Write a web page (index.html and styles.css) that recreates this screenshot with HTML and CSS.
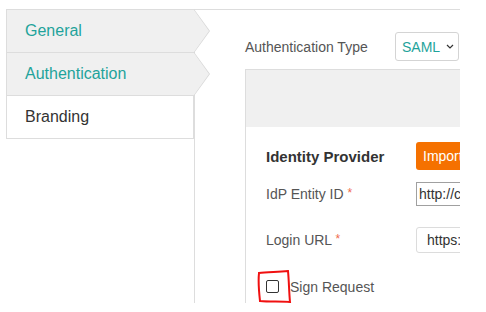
FILE: index.html
```html
<!DOCTYPE html>
<html lang="en">
<head>
    <meta charset="UTF-8">
    <meta name="viewport" content="width=device-width, initial-scale=1.0">
    <title>SSO Settings</title>
    <link rel="stylesheet" href="styles.css">
</head>
<body>
    <div class="layout">
        <!-- Settings tabs -->
        <ul class="tabs">
            <li class="tab tab-arrow">General</li>
            <li class="tab tab-arrow">Authentication</li>
            <li class="tab tab-current">Branding</li>
        </ul>

        <div class="content">
            <div class="type-row">
                <span class="type-label">Authentication Type</span>
                <div class="fake-select">
                    <span>SAML</span>
                    <svg width="8" height="5" viewBox="0 0 8 5"><path d="M1 1 L4 4 L7 1" fill="none" stroke="#333" stroke-width="1.2"/></svg>
                </div>
            </div>

            <div class="panel">
                <div class="panel-head"></div>
                <div class="panel-body">
                    <div class="form-row head-row">
                        <h3>Identity Provider</h3>
                        <button type="button" class="btn-import">Import Metadata</button>
                    </div>
                    <div class="form-row idp-row">
                        <label for="entityId">IdP Entity ID <span class="req">*</span></label>
                        <input type="text" id="entityId" class="input-plain" value="http://cloudsso.example.com/idp">
                    </div>
                    <div class="form-row login-row">
                        <label for="loginUrl">Login URL <span class="req">*</span></label>
                        <input type="text" id="loginUrl" class="input-round" value="https://sso.example.com/login">
                    </div>
                    <div class="check-row">
                        <span class="check-box"></span>
                        <span class="check-text">Sign Request</span>
                        <!-- hand-drawn marker -->
                        <svg class="marker" width="38" height="36" viewBox="0 0 38 36">
                            <path d="M3 3 C10 2 20 2 32 1 C33 11 33 22 34 32 C25 31 14 32 4 31 C3 22 2 12 3 3 Z" fill="none" stroke="#f01010" stroke-width="2"/>
                        </svg>
                    </div>
                </div>
            </div>
        </div>
    </div>
</body>
</html>
```

FILE: styles.css
```css
body {
    margin: 0;
    font-family: "Liberation Sans", Arial, sans-serif;
    background-color: #ffffff;
    color: #333;
}

.layout {
    display: flex;
    margin: 9px 0 0 6px;
    width: 454px;
    height: 294px;
}

/* Tabs */
.tabs {
    list-style: none;
    margin: 0;
    padding: 0;
    width: 188px;
    flex-shrink: 0;
    position: relative;
    z-index: 1;
    border-top: 1px solid #ddd;
    align-self: flex-start;
}

.tab {
    position: relative;
    height: 42px;
    line-height: 42px;
    padding-left: 18px;
    font-size: 16px;
    border-left: 1px solid #ddd;
    border-bottom: 1px solid #ddd;
}

.tab-arrow {
    background-color: #f0f0f0;
    color: #1fa39b;
}

.tab-arrow::before,
.tab-arrow::after {
    content: "";
    position: absolute;
    left: 100%;
    width: 0;
    height: 0;
}

.tab-arrow::before {
    top: -1px;
    border-left: 16px solid #d8d8d8;
    border-top: 22px solid transparent;
    border-bottom: 22px solid transparent;
}

.tab-arrow::after {
    top: 0;
    border-left: 15px solid #f0f0f0;
    border-top: 21px solid transparent;
    border-bottom: 21px solid transparent;
}

.tab-current {
    background-color: #ffffff;
    color: #333;
    border-right: 1px solid #ddd;
    width: 168px;
}

/* Content */
.content {
    flex: 1;
    border-top: 1px solid #ddd;
    border-left: 1px solid #ddd;
    padding: 22px 0 0 50px;
    overflow: hidden;
}

.type-row {
    display: flex;
    align-items: center;
    height: 29px;
}

.type-label {
    width: 150px;
    font-size: 14px;
    color: #555;
}

.fake-select {
    display: flex;
    align-items: center;
    gap: 6px;
    box-sizing: border-box;
    width: 64px;
    height: 29px;
    padding-left: 6px;
    border: 1px solid #d4d4d4;
    border-radius: 3px;
    font-size: 14px;
    color: #1fa39b;
}

.panel {
    margin-top: 8px;
    width: 320px;
    height: 300px;
    border-top: 1px solid #ddd;
    border-left: 1px solid #ddd;
}

.panel-head {
    height: 57px;
    background-color: #f0f0f0;
}

.panel-body {
    padding: 15px 0 0 20px;
}

.form-row {
    display: flex;
    align-items: center;
}

.form-row h3,
.form-row label {
    width: 150px;
    flex-shrink: 0;
    margin: 0;
}

.head-row {
    height: 28px;
}

.head-row h3 {
    font-size: 15px;
    font-weight: bold;
    color: #333;
}

.btn-import {
    height: 28px;
    padding: 0 7px;
    border: none;
    border-radius: 3px;
    background-color: #f57100;
    color: #ffffff;
    font-family: inherit;
    font-size: 14px;
    white-space: nowrap;
}

.form-row label {
    font-size: 14px;
    color: #555;
}

.req {
    color: #ef6a4c;
    font-size: 12px;
    vertical-align: 2px;
}

.idp-row {
    margin-top: 12px;
    height: 24px;
}

.login-row {
    margin-top: 21px;
    height: 26px;
}

.input-plain,
.input-round {
    box-sizing: border-box;
    width: 220px;
    font-family: inherit;
    font-size: 14px;
    color: #333;
    outline: none;
}

.input-plain {
    height: 24px;
    padding: 0 2px;
    border: 1px solid #a0a0a0;
}

.input-round {
    height: 26px;
    padding: 0 10px;
    border: 1px solid #dcdcdc;
    border-radius: 3px;
}

.check-row {
    position: relative;
    display: flex;
    align-items: center;
    gap: 11px;
    margin-top: 27px;
    height: 13px;
}

.check-box {
    box-sizing: border-box;
    width: 13px;
    height: 13px;
    border: 1px solid #333;
    border-radius: 2px;
}

.check-text {
    font-size: 14px;
    color: #555;
}

.marker {
    position: absolute;
    left: -10px;
    top: -10px;
}
```
